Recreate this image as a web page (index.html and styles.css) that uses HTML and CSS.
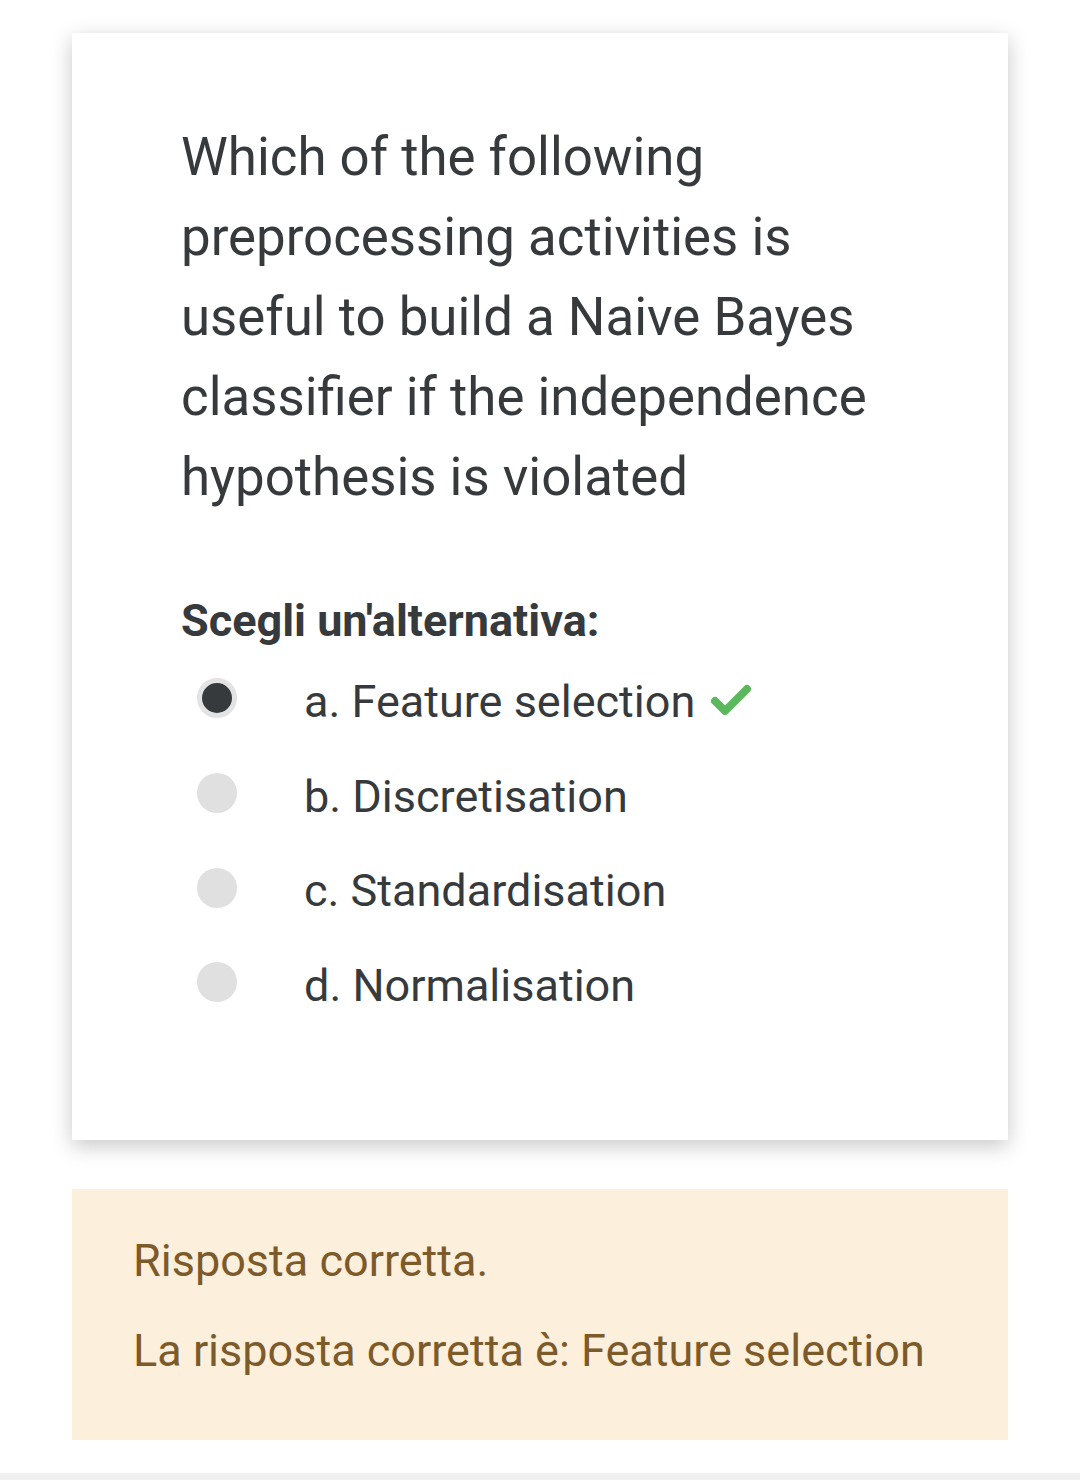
FILE: index.html
```html
<!DOCTYPE html>
<html lang="it">
<head>
<meta charset="utf-8">
<link rel="stylesheet" href="styles.css">
</head>
<body>
<div class="page">
  <div class="card">
    <div class="qtext">Which of the following preprocessing activities is useful to build a Naive Bayes classifier if the independence hypothesis is violated</div>
    <div class="prompt">Scegli un'alternativa:</div>
    <div class="answers">
      <div class="opt">
        <span class="radio checked"></span>
        <span class="label">a. Feature selection</span>
        <svg class="tick" width="44" height="34" viewBox="0 0 44 34"><path d="M6 18 L16 28 L38 6" fill="none" stroke="#5cb85c" stroke-width="8" stroke-linecap="round" stroke-linejoin="round"/></svg>
      </div>
      <div class="opt"><span class="radio"></span><span class="label">b. Discretisation</span></div>
      <div class="opt"><span class="radio"></span><span class="label">c. Standardisation</span></div>
      <div class="opt"><span class="radio"></span><span class="label">d. Normalisation</span></div>
    </div>
  </div>
  <div class="feedback">
    <div class="fb-line">Risposta corretta.</div>
    <div class="fb-line">La risposta corretta è: Feature selection</div>
  </div>
</div>
<div class="bottom-strip"></div>
</body>
</html>
```

FILE: styles.css
```css
html, body {
  margin: 0;
  padding: 0;
  background: #ffffff;
  font-family: Roboto, "Liberation Sans", sans-serif;
  color: #373a3c;
}
.page {
  padding: 33px 72px 0;
  height: 1440px;
  box-sizing: border-box;
}
.card {
  background: #fff;
  height: 1107px;
  box-sizing: border-box;
  padding: 84px 60px 0 109px;
  box-shadow: 0 6px 20px rgba(0,0,0,0.22);
}
.qtext {
  font-size: 52.8px;
  line-height: 80px;
  width: 700px;
}
.prompt {
  margin-top: 76px;
  font-size: 45px;
  font-weight: 700;
  line-height: 56px;
}
.answers {
  margin-top: 2px;
  display: flex;
  flex-direction: column;
}
.opt {
  display: flex;
  align-items: center;
  height: 94.7px;
}
.radio {
  width: 40px;
  height: 40px;
  border-radius: 50%;
  background: #e0e0e0;
  margin-left: 16px;
  margin-right: 67px;
  box-sizing: border-box;
  flex: none;
}
.radio.checked {
  background: #373a3c;
  border: 5px solid #e3e3e3;
}
.label {
  font-size: 45px;
  padding-top: 6px;
}
.tick {
  margin-left: 14px;
  margin-top: 4px;
}
.feedback {
  margin-top: 49px;
  background: #fcefdc;
  height: 251px;
  box-sizing: border-box;
  padding: 27px 61px 0;
  color: #7d5a29;
  font-size: 45px;
}
.fb-line {
  line-height: 90px;
}
.bottom-strip {
  height: 7px;
  background: #f0f0f0;
  margin-top: 33px;
}
```
